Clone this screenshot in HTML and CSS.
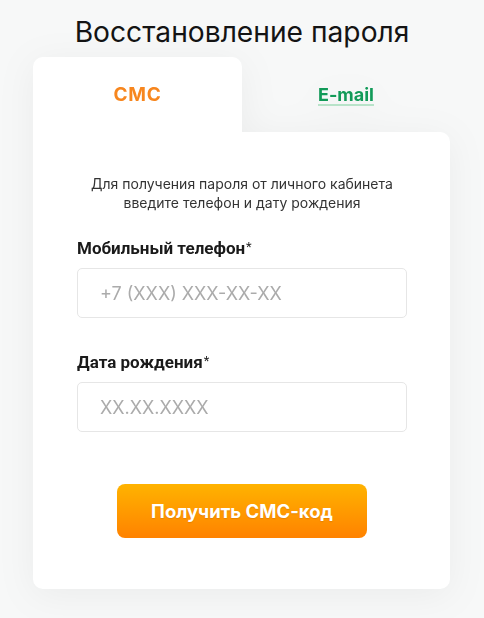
FILE: index.html
```html
<!DOCTYPE html>
<html lang="ru">
<head>
<meta charset="utf-8">
<link rel="stylesheet" href="styles.css">
</head>
<body>
<main class="page">
  <h1 class="title">Восстановление пароля</h1>
  <section class="card">
    <div class="tabs">
      <div class="tab tab-active">СМС</div>
      <div class="tab"><a class="tab-link" href="#">E-mail</a></div>
    </div>
    <form class="panel">
      <p class="desc">Для получения пароля от личного кабинета<br>введите телефон и дату рождения</p>
      <label class="field">
        <span class="label">Мобильный телефон<sup class="req">*</sup></span>
        <input class="input" type="text" placeholder="+7 (XXX) XXX-XX-XX">
      </label>
      <label class="field">
        <span class="label">Дата рождения<sup class="req">*</sup></span>
        <input class="input" type="text" placeholder="XX.XX.XXXX">
      </label>
      <div class="actions">
        <button class="btn" type="button">Получить СМС-код</button>
      </div>
    </form>
  </section>
</main>
</body>
</html>
```

FILE: styles.css
```css
* { box-sizing: border-box; }
html, body { margin: 0; padding: 0; }
body {
  background: #f7f8f8;
  font-family: "Inter", "Open Sans", sans-serif;
  color: #1a1a1a;
  width: 484px;
  height: 618px;
  overflow: hidden;
}
.page {
  padding-top: 14px;
}
.title {
  margin: 0;
  height: 43px;
  text-align: center;
  font-size: 28.2px;
  font-weight: 400;
  line-height: 36px;
  color: #141414;
}
.card {
  width: 417px;
  margin-left: 33px;
  filter: drop-shadow(0 6px 18px rgba(0, 0, 0, 0.05));
}
.tabs {
  display: flex;
  height: 75px;
}
.tab {
  flex: 1;
  display: flex;
  justify-content: center;
  padding-top: 26px;
  font-size: 18px;
  font-weight: 700;
  line-height: 24px;
}
.tab-active {
  flex: 0 0 209px;
  background: #fff;
  border-radius: 10px 10px 0 0;
  color: #f7861e;
  font-size: 19px;
  letter-spacing: 0.8px;
}
.tab-link {
  color: #129a58;
  text-decoration: underline;
  text-decoration-color: #b8e3c9;
  text-decoration-thickness: 2px;
  text-underline-offset: 3px;
}
.panel {
  background: #fff;
  border-radius: 0 10px 10px 10px;
  padding: 42px 43px 51px 44px;
  display: flex;
  flex-direction: column;
}
.desc {
  margin: 0 0 26px;
  text-align: center;
  font-size: 14px;
  line-height: 19px;
  color: #333;
}
.field {
  display: flex;
  flex-direction: column;
  margin-bottom: 34px;
}
.label {
  font-family: "Roboto", "Inter", sans-serif;
  font-size: 17px;
  font-weight: 700;
  line-height: 20px;
  margin-bottom: 10px;
  color: #1a1a1a;
}
.req {
  font-size: 13px;
  font-weight: 400;
  line-height: 0;
  vertical-align: 3px;
  margin-left: 1px;
}
.input {
  width: 330px;
  height: 50px;
  border: 1px solid #e6e6e6;
  border-radius: 5px;
  padding: 0 22px;
  font-family: inherit;
  font-size: 18px;
  color: #333;
  background: #fff;
  outline: none;
}
.input::placeholder {
  color: #ababab;
}
.actions {
  display: flex;
  justify-content: center;
  padding-top: 18px;
}
.btn {
  width: 250px;
  height: 54px;
  border: none;
  border-radius: 8px;
  background: linear-gradient(#ffb300, #ff8200);
  color: #fff;
  font-family: inherit;
  font-size: 18.5px;
  font-weight: 700;
  text-shadow: 0 1px 1px rgba(160, 80, 0, 0.25);
  cursor: pointer;
}
```
